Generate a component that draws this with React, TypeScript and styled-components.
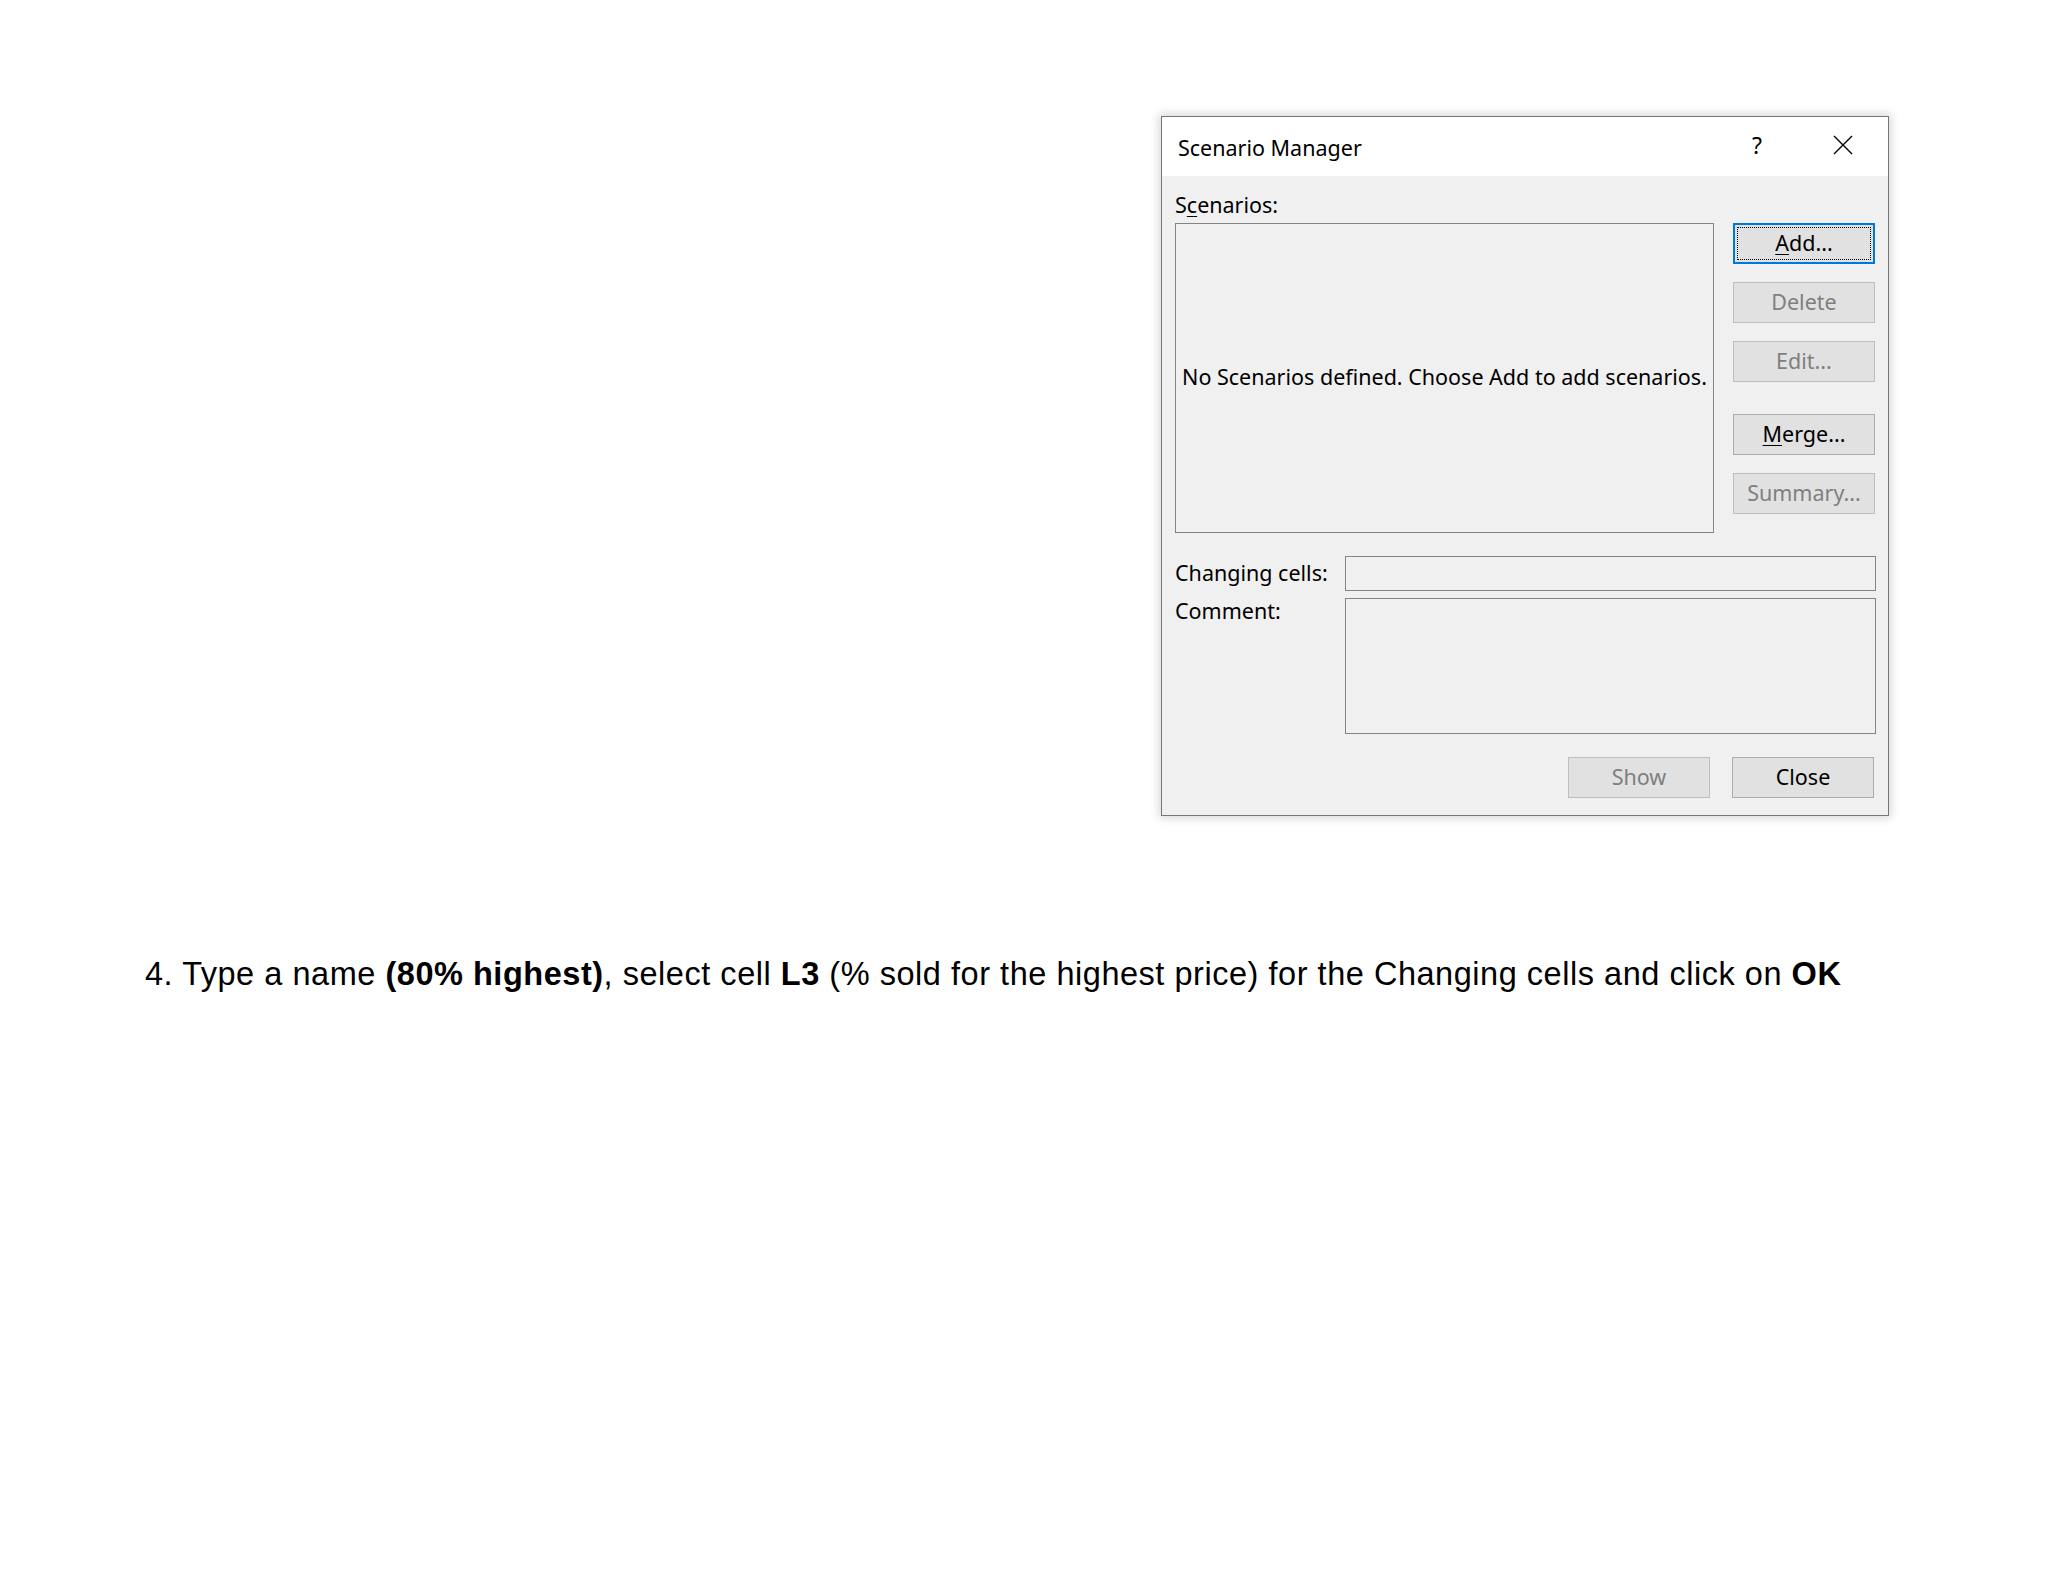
import styled, { createGlobalStyle } from "styled-components";

const GlobalStyle = createGlobalStyle`
    html, body {
        margin: 0;
        padding: 0;
        background: #ffffff;
    }
    * {
        box-sizing: border-box;
    }
`;

const Page = styled.div`
    width: 2048px;
    height: 1582px;
    padding-top: 116px;
    background: #ffffff;
    overflow: hidden;
`;

const Dialog = styled.div`
    margin-left: 1161px;
    width: 728px;
    border: 1px solid #767676;
    background: #f0f0f0;
    box-shadow: 0 0 9px 2px rgba(0, 0, 0, 0.16);
    font-family: "Noto Sans", "Open Sans", sans-serif;
    font-size: 21.5px;
    color: #000;
`;

const TitleBar = styled.div`
    height: 59px;
    background: #ffffff;
    display: flex;
    align-items: center;
    padding: 0 0 0 16px;
`;

const Title = styled.div`
    flex: 1;
    line-height: 24px;
    margin-top: 2px;
`;

const TitleIcon = styled.div<{ gap?: number }>`
    width: 26px;
    margin-left: ${(p) => p.gap ?? 0}px;
    display: flex;
    justify-content: center;
    align-items: center;
    margin-top: -4px;
    font-size: 23px;
`;

const Body = styled.div`
    padding: 17px 13px 17px 13px;
`;

const Label = styled.div`
    line-height: 24px;
    white-space: nowrap;
`;

const TopRow = styled.div`
    margin-top: 6px;
    display: grid;
    grid-template-columns: 1fr 142px;
    column-gap: 19px;
`;

const ListBox = styled.div`
    height: 310px;
    border: 1px solid #848484;
    background: #f0f0f0;
    display: flex;
    align-items: center;
    justify-content: center;
    white-space: nowrap;
    padding-bottom: 3px;
`;

const ButtonColumn = styled.div`
    display: flex;
    flex-direction: column;
`;

const Button = styled.div<{ disabled?: boolean; focused?: boolean; gap?: number }>`
    position: relative;
    width: 142px;
    height: 41px;
    margin-top: ${(p) => p.gap ?? 0}px;
    padding-bottom: 2px;
    display: flex;
    align-items: center;
    justify-content: center;
    background: #e1e1e1;
    border: ${(p) => (p.focused ? "2px solid #0078d7" : p.disabled ? "1px solid #bdbdbd" : "1px solid #adadad")};
    color: ${(p) => (p.disabled ? "#7f7f7f" : "#000")};
    line-height: 24px;

    ${(p) =>
        p.focused &&
        `
        &::after {
            content: "";
            position: absolute;
            inset: 2px;
            border: 1px dotted #000;
        }
    `}
`;

const Field = styled.div<{ h: number }>`
    height: ${(p) => p.h}px;
    border: 1px solid #848484;
    background: #f0f0f0;
`;

const FormGrid = styled.div`
    margin-top: 23px;
    display: grid;
    grid-template-columns: 170px 1fr;
    row-gap: 7px;
    margin-right: -1px;
`;

const FieldLabel = styled(Label)<{ top?: number }>`
    align-self: ${(p) => (p.top !== undefined ? "start" : "center")};
    margin-top: ${(p) => p.top ?? 0}px;
    padding-bottom: 2px;
`;

const Footer = styled.div`
    margin-top: 23px;
    display: flex;
    justify-content: flex-end;
    gap: 22px;
    padding-right: 1px;
`;

const Key = styled.span`
    text-decoration: underline;
    text-underline-offset: 3px;
    text-decoration-thickness: 1px;
`;

const Instruction = styled.p`
    margin: 140px 0 0 145px;
    font-family: "Liberation Sans", Arial, sans-serif;
    font-size: 32.5px;
    letter-spacing: 0.53px;
    line-height: 36px;
    color: #000;
    white-space: nowrap;

    b {
        font-weight: 700;
    }
`;

const CloseIcon = () => (
    <svg width="20" height="20" viewBox="0 0 20 20">
        <path d="M1 1 L19 19 M19 1 L1 19" stroke="#000" strokeWidth="1.4" fill="none" />
    </svg>
);

export default function App() {
    return (
        <Page>
            <GlobalStyle />
            <Dialog>
                <TitleBar>
                    <Title>Scenario Manager</Title>
                    <TitleIcon>?</TitleIcon>
                    <TitleIcon gap={60} style={{ marginRight: 32 }}>
                        <CloseIcon />
                    </TitleIcon>
                </TitleBar>
                <Body>
                    <Label>
                        S<Key>c</Key>enarios:
                    </Label>
                    <TopRow>
                        <ListBox>No Scenarios defined. Choose Add to add scenarios.</ListBox>
                        <ButtonColumn>
                            <Button focused>
                                <Key>A</Key>dd...
                            </Button>
                            <Button disabled gap={18}>
                                Delete
                            </Button>
                            <Button disabled gap={18}>
                                Edit...
                            </Button>
                            <Button gap={32}>
                                <Key>M</Key>erge...
                            </Button>
                            <Button disabled gap={18}>
                                Summary...
                            </Button>
                        </ButtonColumn>
                    </TopRow>
                    <FormGrid>
                        <FieldLabel>Changing cells:</FieldLabel>
                        <Field h={35} />
                        <FieldLabel top={1}>Comment:</FieldLabel>
                        <Field h={136} />
                    </FormGrid>
                    <Footer>
                        <Button disabled>Show</Button>
                        <Button>Close</Button>
                    </Footer>
                </Body>
            </Dialog>
            <Instruction>
                4. Type a name <b>(80% highest)</b>, select cell <b>L3</b> (% sold for the highest price) for the
                Changing cells and click on <b>OK</b>
            </Instruction>
        </Page>
    );
}
